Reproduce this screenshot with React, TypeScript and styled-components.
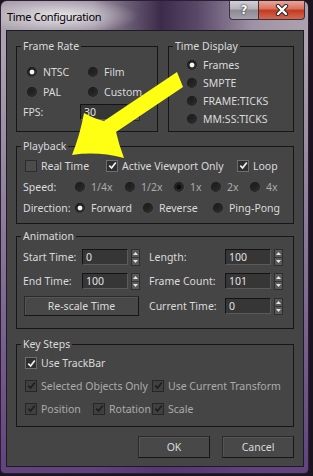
import React from "react";
import styled, { createGlobalStyle, css } from "styled-components";

const UI_FONT = `"Noto Sans", "Open Sans", sans-serif`;

const GlobalStyle = createGlobalStyle`
  html, body {
    margin: 0;
    padding: 0;
    background: #1b1320;
  }
  body {
    width: 313px;
    height: 476px;
    overflow: hidden;
    font-family: ${UI_FONT};
  }
  * {
    box-sizing: border-box;
  }
`;

const Window = styled.div`
  position: relative;
  width: 309px;
  height: 474px;
  display: flex;
  flex-direction: column;
  padding: 0 4px 6px 5px;
  border: 1px solid #2b2033;
  border-radius: 7px 7px 5px 5px;
  background:
    radial-gradient(ellipse 78px 18px at 60px 15px, rgba(255, 255, 255, 0.75), rgba(255, 255, 255, 0) 100%),
    linear-gradient(180deg, rgba(0, 0, 0, 0) 0, rgba(0, 0, 0, 0) 50px, rgba(88, 56, 120, 0.9) 100%),
    linear-gradient(90deg, #aca3af 0%, #9c91a2 30%, #3d2b4b 52%, #5a4869 64%, #9e93a6 82%, #aca2ae 100%);
`;

const TitleBar = styled.div`
  display: flex;
  justify-content: space-between;
  height: 29px;
`;

const Title = styled.div`
  align-self: center;
  margin: 1px 0 0 1px;
  font-family: ${UI_FONT};
  font-size: 11px;
  letter-spacing: -0.3px;
  color: #000;
`;

const CaptionButtons = styled.div`
  display: flex;
  align-self: flex-start;
  margin-right: -1px;
`;

const CaptionButton = styled.div<{ $kind: "help" | "close" }>`
  display: flex;
  align-items: center;
  justify-content: center;
  height: 19px;
  border: 1px solid #3b3042;
  border-top: none;
  ${(p) =>
    p.$kind === "help"
      ? css`
          width: 29px;
          border-right: none;
          border-radius: 0 0 0 4px;
          background: linear-gradient(180deg, #d2d0d6 0%, #b4b1ba 45%, #8d8995 50%, #a4a0ac 100%);
        `
      : css`
          width: 47px;
          border-radius: 0 0 4px 0;
          background: linear-gradient(180deg, #e9a597 0%, #d9705c 45%, #c13a22 50%, #d5674b 100%);
        `}
  font-family: "DejaVu Sans", sans-serif;
  font-weight: 700;
  font-size: 12px;
  color: #fff;
  text-shadow: 0 0 1px #222, 0 0 2px #333;
`;

const Client = styled.div`
  flex: 1;
  display: flex;
  flex-direction: column;
  padding: 9px 9px 0 9px;
  border: 1px solid #1e1a22;
  background: #454545;
  font-family: ${UI_FONT};
  font-size: 10.5px;
  color: #dadada;
`;

const TopRow = styled.div`
  display: flex;
  gap: 10px;
  height: 92px;
`;

const Group = styled.fieldset<{ $h?: number; $w?: number; $mt?: number; $pt: number }>`
  margin: ${(p) => p.$mt ?? 0}px 0 0;
  padding: ${(p) => p.$pt}px 6px 0;
  width: ${(p) => (p.$w ? `${p.$w}px` : "auto")};
  height: ${(p) => (p.$h ? `${p.$h}px` : "auto")};
  min-width: 0;
  border: 1px solid #161616;
`;

const Legend = styled.legend`
  margin-left: -2px;
  padding: 0 2px;
  font-size: 10.5px;
  line-height: 12px;
  color: #dadada;
`;

const Row = styled.div<{ $h: number; $indent?: number }>`
  display: flex;
  align-items: center;
  height: ${(p) => p.$h}px;
  padding-left: ${(p) => p.$indent ?? 0}px;
  white-space: nowrap;
`;

const Opt = styled.label<{ $w?: number; $dim?: boolean; $gap?: number }>`
  flex: none;
  display: inline-flex;
  align-items: center;
  gap: ${(p) => p.$gap ?? 6}px;
  width: ${(p) => (p.$w ? `${p.$w}px` : "auto")};
  color: ${(p) => (p.$dim ? "#ababab" : "#dadada")};
`;

const Text = styled.span<{ $w?: number; $ml?: number }>`
  flex: none;
  width: ${(p) => (p.$w ? `${p.$w}px` : "auto")};
  margin-left: ${(p) => p.$ml ?? 0}px;
`;

const RadioDot = styled.span<{ $checked?: boolean; $disabled?: boolean }>`
  flex: none;
  width: 10px;
  height: 10px;
  border-radius: 50%;
  background: ${(p) =>
    p.$checked
      ? `radial-gradient(circle at 50% 50%, ${p.$disabled ? "#0c0c0c" : "#f4f4f4"} 0 2px, rgba(0,0,0,0) 2.8px),`
      : ""}
    radial-gradient(circle at 40% 35%, #1d1d1d 0%, #262626 50%, #4a4a4a 100%);
  box-shadow: inset 0 0 0 1px rgba(0, 0, 0, 0.25), 0.5px 0.5px 0 rgba(255, 255, 255, 0.08);
`;

const CheckBox = styled.span<{ $checked?: boolean; $disabled?: boolean }>`
  flex: none;
  display: inline-flex;
  align-items: center;
  justify-content: center;
  width: 12px;
  height: 12px;
  background: ${(p) => (p.$disabled ? "#404040" : p.$checked ? "#2f2f2f" : "#4c4c4c")};
  border: 1px solid ${(p) => (p.$disabled ? "#262626" : p.$checked ? "#6e6e6e" : "#2c2c2c")};
`;

const SpinField = styled.div`
  flex: none;
  display: flex;
  align-items: center;
  gap: 3px;
`;

const Field = styled.div<{ $w: number }>`
  width: ${(p) => p.$w}px;
  height: 16px;
  padding: 0 0 0 3px;
  line-height: 14px;
  background: #363636;
  border: 1px solid #5a5a5a;
  border-top-color: #141414;
  border-left-color: #141414;
  color: #e2e2e2;
`;

const Spinner = styled.div`
  display: flex;
  flex-direction: column;
  width: 9px;
  height: 17px;
  background: #595959;
  border: 1px solid #2e2e2e;
`;

const SpinHalf = styled.span`
  flex: 1;
  display: flex;
  align-items: center;
  justify-content: center;
  & + & {
    border-top: 1px solid #333;
  }
`;

const PushButton = styled.div<{ $w: number; $h: number; $ml?: number }>`
  flex: none;
  display: flex;
  align-items: center;
  justify-content: center;
  width: ${(p) => p.$w}px;
  height: ${(p) => p.$h}px;
  margin-left: ${(p) => p.$ml ?? 0}px;
  background: #484848;
  border: 1px solid #161616;
  border-top-color: #2a2a2a;
  border-left-color: #2a2a2a;
  box-shadow: inset 1px 1px 0 #555;
  color: #dadada;
`;

const ButtonRow = styled.div`
  display: flex;
  justify-content: flex-end;
  gap: 12px;
  margin-top: 9px;
`;

const Arrow = styled.svg`
  position: absolute;
  left: -1px;
  top: -1px;
  pointer-events: none;
`;

function Radio({ label, checked, disabled, w }: { label: string; checked?: boolean; disabled?: boolean; w?: number }) {
  return (
    <Opt $w={w} $dim={disabled}>
      <RadioDot $checked={checked} $disabled={disabled} />
      <span>{label}</span>
    </Opt>
  );
}

function Check({ label, checked, disabled, w }: { label: string; checked?: boolean; disabled?: boolean; w?: number }) {
  return (
    <Opt $w={w} $dim={disabled} $gap={4}>
      <CheckBox $checked={checked} $disabled={disabled}>
        {checked && (
          <svg width="9" height="9" viewBox="0 0 9 9">
            <path
              d="M1.3 4.6 L3.6 7 L7.8 1.4"
              fill="none"
              stroke={disabled ? "#1e1e1e" : "#f0f0f0"}
              strokeWidth="1.7"
            />
          </svg>
        )}
      </CheckBox>
      <span>{label}</span>
    </Opt>
  );
}

function Spin({ value, w = 46 }: { value: string; w?: number }) {
  return (
    <SpinField>
      <Field $w={w}>{value}</Field>
      <Spinner>
        <SpinHalf>
          <svg width="5" height="3" viewBox="0 0 5 3">
            <path d="M0 3 L2.5 0 L5 3 Z" fill="#e6e6e6" />
          </svg>
        </SpinHalf>
        <SpinHalf>
          <svg width="5" height="3" viewBox="0 0 5 3">
            <path d="M0 0 L2.5 3 L5 0 Z" fill="#e6e6e6" />
          </svg>
        </SpinHalf>
      </Spinner>
    </SpinField>
  );
}

export default function App() {
  return (
    <>
      <GlobalStyle />
      <Window>
        <TitleBar>
          <Title>Time Configuration</Title>
          <CaptionButtons>
            <CaptionButton $kind="help">?</CaptionButton>
            <CaptionButton $kind="close">
              <svg width="14" height="12" viewBox="0 0 14 12">
                <path d="M3 2 L11 10 M11 2 L3 10" stroke="#2a2a2a" strokeWidth="4.4" strokeLinecap="round" />
                <path d="M3 2 L11 10 M11 2 L3 10" stroke="#fff" strokeWidth="2.4" strokeLinecap="round" />
              </svg>
            </CaptionButton>
          </CaptionButtons>
        </TitleBar>

        <Client>
          <TopRow>
            <Group $w={142} $pt={10}>
              <Legend>Frame Rate</Legend>
              <Row $h={20} $indent={4}>
                <Radio label="NTSC" checked w={61} />
                <Radio label="Film" />
              </Row>
              <Row $h={20} $indent={4}>
                <Radio label="PAL" w={61} />
                <Radio label="Custom" />
              </Row>
              <Row $h={20}>
                <Text $w={57}>FPS:</Text>
                <Spin value="30" w={48} />
              </Row>
            </Group>
            <Group $w={126} $pt={4}>
              <Legend>Time Display</Legend>
              <Row $h={18} $indent={12}>
                <Radio label="Frames" checked />
              </Row>
              <Row $h={18} $indent={12}>
                <Radio label="SMPTE" />
              </Row>
              <Row $h={18} $indent={12}>
                <Radio label="FRAME:TICKS" />
              </Row>
              <Row $h={18} $indent={12}>
                <Radio label="MM:SS:TICKS" />
              </Row>
            </Group>
          </TopRow>

          <Group $h={84} $mt={8} $pt={3}>
            <Legend>Playback</Legend>
            <Row $h={21} $indent={2}>
              <Check label="Real Time" w={81} />
              <Check label="Active Viewport Only" checked w={131} />
              <Check label="Loop" checked />
            </Row>
            <Row $h={21}>
              <Text $w={52}>Speed:</Text>
              <Radio label="1/4x" disabled w={50} />
              <Radio label="1/2x" disabled w={49} />
              <Radio label="1x" checked disabled w={37} />
              <Radio label="2x" disabled w={39} />
              <Radio label="4x" disabled />
            </Row>
            <Row $h={21}>
              <Text $w={52}>Direction:</Text>
              <Radio label="Forward" checked w={68} />
              <Radio label="Reverse" w={70} />
              <Radio label="Ping-Pong" />
            </Row>
          </Group>

          <Group $h={99} $mt={6} $pt={3}>
            <Legend>Animation</Legend>
            <Row $h={24}>
              <Text $w={59}>Start Time:</Text>
              <Spin value="0" />
              <Text $w={76} $ml={9}>
                Length:
              </Text>
              <Spin value="100" />
            </Row>
            <Row $h={24}>
              <Text $w={59}>End Time:</Text>
              <Spin value="100" />
              <Text $w={76} $ml={9}>
                Frame Count:
              </Text>
              <Spin value="101" />
            </Row>
            <Row $h={26}>
              <PushButton $w={115} $h={20} $ml={1}>
                Re-scale Time
              </PushButton>
              <Text $w={76} $ml={10}>
                Current Time:
              </Text>
              <Spin value="0" />
            </Row>
          </Group>

          <Group $h={89} $mt={9} $pt={2}>
            <Legend>Key Steps</Legend>
            <Row $h={22} $indent={2}>
              <Check label="Use TrackBar" checked />
            </Row>
            <Row $h={23} $indent={2}>
              <Check label="Selected Objects Only" checked disabled w={127} />
              <Check label="Use Current Transform" checked disabled />
            </Row>
            <Row $h={23} $indent={2}>
              <Check label="Position" checked disabled w={68} />
              <Check label="Rotation" checked disabled w={59} />
              <Check label="Scale" checked disabled />
            </Row>
          </Group>

          <ButtonRow>
            <PushButton $w={72} $h={22}>
              OK
            </PushButton>
            <PushButton $w={72} $h={22}>
              Cancel
            </PushButton>
          </ButtonRow>
        </Client>

        <Arrow width="313" height="476" viewBox="0 0 313 476">
          <path
            d="M177 72 L183 87 L116 132 Q119 145 124 158 Q97 151 72 155 Q80 135 84 113 Q95 119 104 121 Z"
            fill="#ffff14"
          />
        </Arrow>
      </Window>
    </>
  );
}
